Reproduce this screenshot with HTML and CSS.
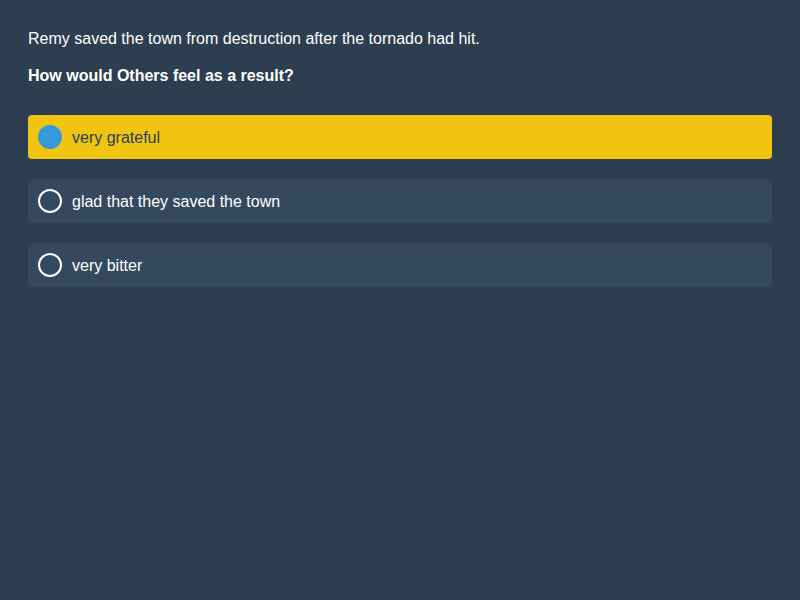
FILE: index.html
```html
<!DOCTYPE html>
<html lang="en">
<head>
<meta charset="utf-8">
<link rel="stylesheet" href="styles.css">
</head>
<body>
<main class="quiz">
  <p class="context">Remy saved the town from destruction after the tornado had hit.</p>
  <p class="question">How would Others feel as a result?</p>
  <ul class="options">
    <li class="option selected"><span class="radio"></span><span class="label">very grateful</span></li>
    <li class="option"><span class="radio"></span><span class="label">glad that they saved the town</span></li>
    <li class="option"><span class="radio"></span><span class="label">very bitter</span></li>
  </ul>
</main>
</body>
</html>
```
FILE: styles.css
```css
html, body {
  margin: 0;
  height: 100%;
}
body {
  background: #2c3e50;
  color: #ffffff;
  font-family: "Liberation Sans", Arial, sans-serif;
  font-size: 16px;
}
.quiz {
  padding: 30px 28px 28px;
}
.context {
  margin: 0 0 19px;
  line-height: 18px;
}
.question {
  margin: 0;
  line-height: 18px;
  font-weight: bold;
}
.options {
  list-style: none;
  margin: 30px 0 0;
  padding: 0;
  display: flex;
  flex-direction: column;
  gap: 20px;
}
.option {
  display: flex;
  align-items: center;
  gap: 10px;
  height: 44px;
  padding: 0 10px;
  background: #34495e;
  border-radius: 4px;
  box-sizing: border-box;
}
.label {
  padding-top: 2px;
}
.radio {
  width: 24px;
  height: 24px;
  border: 2px solid #ffffff;
  border-radius: 50%;
  box-sizing: border-box;
  flex: none;
}
.option.selected {
  background: #f1c40f;
  color: #2c3e50;
}
.option.selected .radio {
  background: #3498db;
  border-color: #3498db;
}
```
